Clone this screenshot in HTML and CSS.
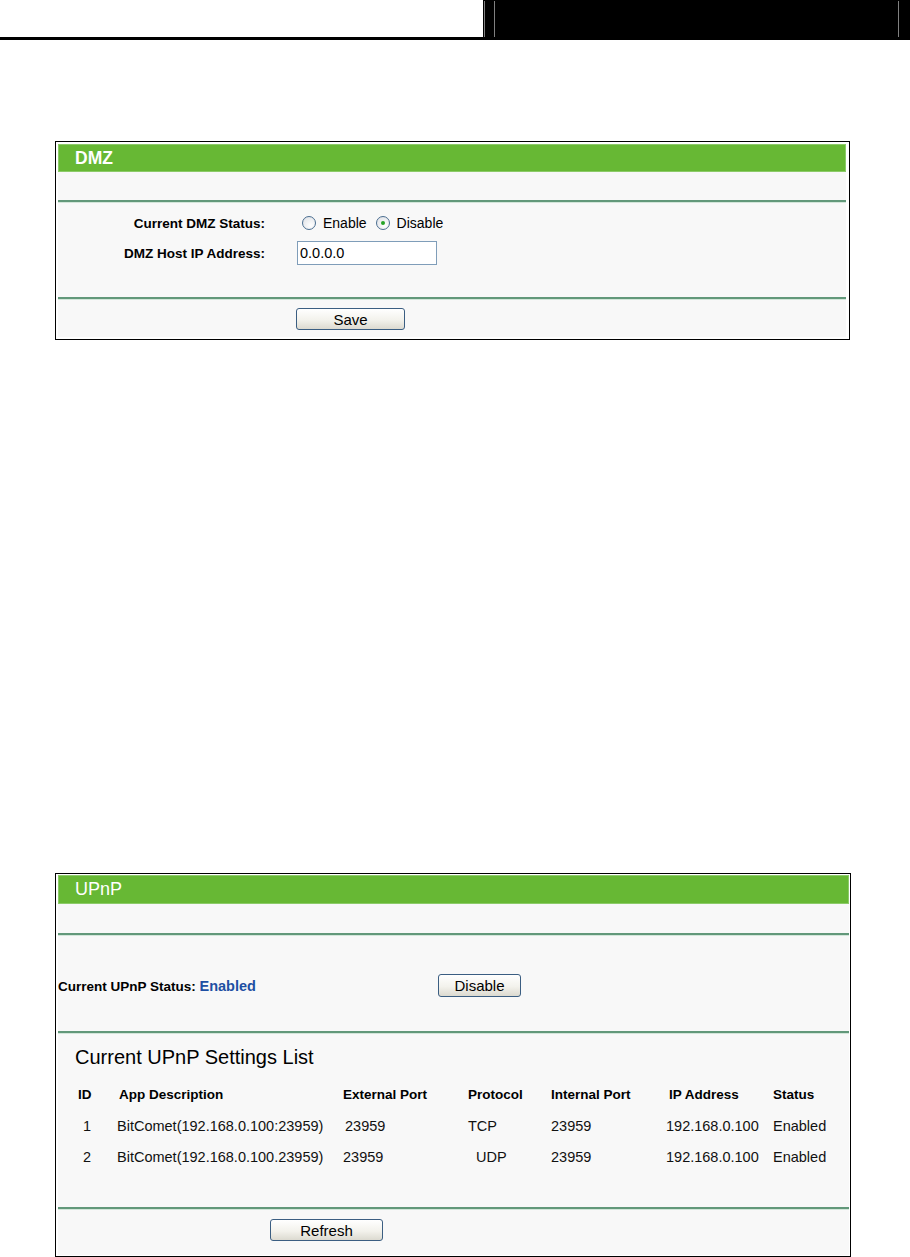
FILE: index.html
```html
<!DOCTYPE html>
<html>

<head>
  <meta charset="utf-8">
  <title>DMZ / UPnP</title>
  <link rel="stylesheet" href="styles.css">
</head>

<body>
  <div class="page-head">
    <div class="head-left"></div>
    <div class="head-box">
      <span class="head-rule"></span>
      <span class="head-rule"></span>
      <span class="head-fill"></span>
      <span class="head-rule"></span>
    </div>
  </div>

  <div class="panel" id="dmzPanel">
    <div class="panel-inner">
      <div class="panel-title">DMZ</div>
      <div class="panel-blank"></div>
      <div class="sep"></div>

      <div class="dmz-form">
        <label class="lbl">Current DMZ Status:</label>
        <div class="radios">
          <span class="radio"></span><span class="radio-text">Enable</span>
          <span class="radio checked"></span><span class="radio-text">Disable</span>
        </div>
        <label class="lbl" for="dmzIp">DMZ Host IP Address:</label>
        <div><input class="ip-input" type="text" id="dmzIp" value="0.0.0.0"></div>
      </div>

      <div class="sep"></div>
      <div class="btn-row dmz-btns">
        <button class="btn save-btn">Save</button>
      </div>
    </div>
  </div>

  <div class="panel" id="upnpPanel">
    <div class="panel-inner">
      <div class="panel-title">UPnP</div>
      <div class="panel-blank"></div>
      <div class="sep"></div>

      <div class="upnp-status">
        <div class="status-lbl">Current UPnP Status: <span class="status-val">Enabled</span></div>
        <button class="btn disable-btn">Disable</button>
      </div>

      <div class="sep"></div>
      <div class="list-area">
        <div class="list-title">Current UPnP Settings List</div>
        <div class="upnp-grid">
          <div class="th">ID</div>
          <div class="th">App Description</div>
          <div class="th">External Port</div>
          <div class="th">Protocol</div>
          <div class="th">Internal Port</div>
          <div class="th ipcol">IP Address</div>
          <div class="th">Status</div>

          <div class="idc">1</div>
          <div class="desc">BitComet(192.168.0.100:23959)</div>
          <div class="ext">23959</div>
          <div>TCP</div>
          <div>23959</div>
          <div>192.168.0.100</div>
          <div>Enabled</div>

          <div class="idc">2</div>
          <div class="desc">BitComet(192.168.0.100.23959)</div>
          <div>23959</div>
          <div class="shift">UDP</div>
          <div>23959</div>
          <div>192.168.0.100</div>
          <div>Enabled</div>
        </div>
      </div>

      <div class="sep"></div>
      <div class="btn-row upnp-btns">
        <button class="btn refresh-btn">Refresh</button>
      </div>
    </div>
  </div>
</body>

</html>
```

FILE: styles.css
```css
body {
  margin: 0;
  background: #fff;
  color: #000;
  font-family: "Liberation Sans", Arial, sans-serif;
}

/* top strip of the manual page */
.page-head {
  display: flex;
  height: 40px;
}

.head-left {
  width: 483px;
  border-bottom: 3px solid #000;
  box-sizing: border-box;
}

.head-box {
  flex: 1;
  display: flex;
  gap: 9px;
  padding: 1px 11px 3px 1px;
  background: #000;
}

.head-rule {
  width: 1px;
  background: #808080;
}

.head-fill {
  flex: 1;
}

/* panels */
.panel {
  margin-left: 55px;
  border: 1px solid #000;
  box-sizing: border-box;
  background: #fff;
}

#dmzPanel {
  width: 795px;
  margin-top: 101px;
  padding: 2px 3px 2px 2px;
}

#upnpPanel {
  width: 796px;
  margin-top: 533px;
  padding: 1px 1px 1px 2px;
}

.panel-inner {
  background: #f8f8f8;
}

.panel-title {
  background: #67b834;
  color: #fff;
  padding-left: 17px;
  box-shadow: inset 0 0 0 1px #8ccb68;
}

#dmzPanel .panel-title {
  height: 28px;
  line-height: 28px;
  font-size: 17.5px;
  font-weight: bold;
}

#upnpPanel .panel-title {
  height: 29px;
  line-height: 29px;
  font-size: 18px;
}

#dmzPanel .panel-blank {
  height: 28px;
}

#upnpPanel .panel-blank {
  height: 29px;
}

.sep {
  height: 2px;
  background: #62987a;
  border-bottom: 1px solid #d3e6da;
}

/* DMZ form */
.dmz-form {
  display: grid;
  grid-template-columns: 207px 1fr;
  grid-auto-rows: 30px;
  column-gap: 32px;
  align-items: center;
  padding: 5px 0 29px;
}

.lbl {
  text-align: right;
  font-weight: bold;
  font-size: 13.5px;
}

.radios {
  display: flex;
  align-items: center;
  padding-left: 5px;
  font-size: 14px;
}

.radio {
  position: relative;
  width: 14px;
  height: 14px;
  margin-right: 7px;
  border: 1px solid #4a6d90;
  border-radius: 50%;
  box-sizing: border-box;
  background: radial-gradient(circle at 65% 70%, #fff, #dcdfe4);
}

.radio.checked::after {
  content: "";
  position: absolute;
  left: 4px;
  top: 4px;
  width: 4px;
  height: 4px;
  border-radius: 50%;
  background: #27a327;
}

.radio-text + .radio {
  margin-left: 9px;
}

.ip-input {
  width: 140px;
  height: 24px;
  padding: 0 2px;
  border: 1px solid #7f9db9;
  box-sizing: border-box;
  background: #fff;
  color: #000;
  font: 14.5px "Liberation Sans", Arial, sans-serif;
}

/* buttons */
.btn {
  height: 22px;
  padding: 0;
  border: 1px solid #3b5e82;
  border-radius: 3px;
  box-sizing: border-box;
  background: linear-gradient(#ffffff, #f3f2ec 55%, #dcdad0);
  color: #000;
  font: 15px "Liberation Sans", Arial, sans-serif;
}

.btn-row {
  box-sizing: border-box;
}

.dmz-btns {
  height: 37px;
  padding-top: 8px;
}

.save-btn {
  width: 109px;
  margin-left: 238px;
}

.upnp-btns {
  height: 45px;
  padding-top: 9px;
}

.refresh-btn {
  width: 113px;
  margin-left: 212px;
}

/* UPnP status */
.upnp-status {
  display: flex;
  align-items: center;
  padding: 38px 0 34px;
}

.status-lbl {
  width: 380px;
  font-weight: bold;
  font-size: 13.5px;
}

.status-val {
  color: #1d4fa3;
  font-size: 14.5px;
}

.disable-btn {
  width: 83px;
  height: 23px;
}

/* settings list */
.list-area {
  padding: 12px 0 35px;
}

.list-title {
  padding-left: 17px;
  font-size: 20px;
  line-height: 22px;
}

.upnp-grid {
  display: grid;
  grid-template-columns: 41px 224px 125px 83px 115px 107px 1fr;
  grid-auto-rows: 31px;
  align-items: center;
  margin: 11px 0 0 20px;
  font-size: 14.5px;
  color: #111;
}

.upnp-grid .th {
  font-weight: bold;
  font-size: 13.5px;
  color: #000;
}

.upnp-grid .ipcol {
  padding-left: 3px;
}

.upnp-grid .idc {
  padding-left: 5px;
}

.upnp-grid .desc {
  margin-left: -2px;
}

.upnp-grid .ext {
  padding-left: 2px;
}

.upnp-grid .shift {
  padding-left: 8px;
}
```
